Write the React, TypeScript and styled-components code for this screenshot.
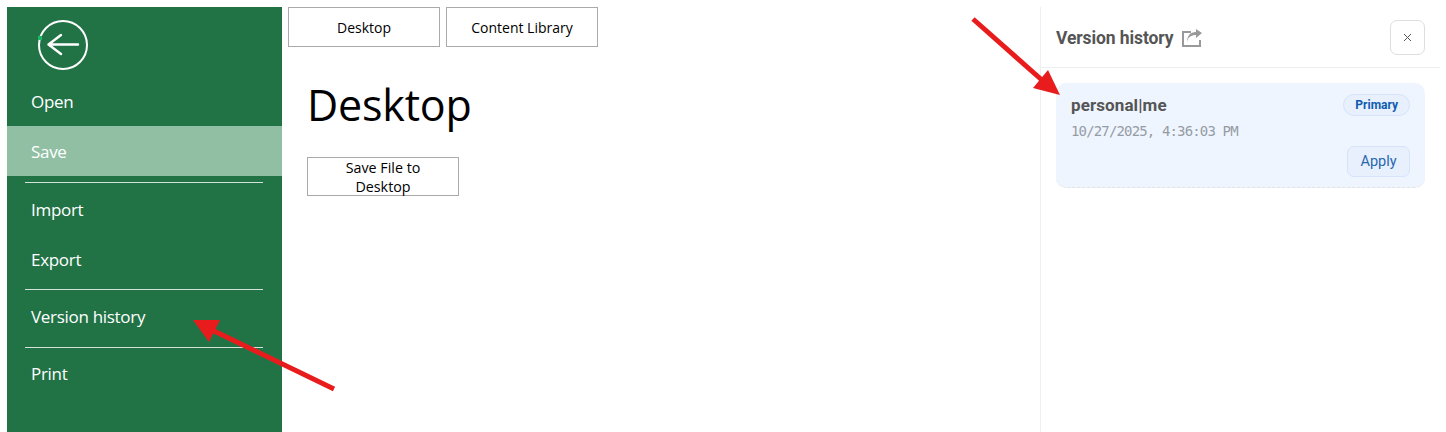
import React from "react";
import styled, { createGlobalStyle } from "styled-components";

const Global = createGlobalStyle`
  html, body { margin: 0; padding: 0; background: #fff; height: 432px; overflow: hidden; }
  #root { height: 432px; }
  * { box-sizing: border-box; }
`;

const Page = styled.div`
  position: relative;
  display: flex;
  width: 1440px;
  height: 432px;
  padding: 7px 0 0 7px;
  font-family: "Open Sans", "Noto Sans", sans-serif;
  overflow: hidden;
`;

const Sidebar = styled.nav`
  flex: 0 0 275px;
  display: flex;
  flex-direction: column;
  background: #217346;
  color: #fff;
`;

const BackWrap = styled.div`
  height: 69px;
  padding: 13px 0 0 30px;
  svg { display: block; }
`;

const MenuItem = styled.div<{ $active?: boolean }>`
  height: 50px;
  display: flex;
  align-items: center;
  padding-left: 24px;
  font-size: 17px;
  letter-spacing: -0.3px;
  background: ${(p) => (p.$active ? "#90bfa3" : "transparent")};
`;

const Rule = styled.hr<{ $top: number; $bottom: number }>`
  margin: ${(p) => p.$top}px 19px ${(p) => p.$bottom}px 18px;
  border: 0;
  height: 1px;
  flex: none;
  background: #d3e3d9;
`;

const Main = styled.main`
  flex: 1;
  display: flex;
  flex-direction: column;
  padding-left: 6px;
  min-width: 0;
`;

const Tabs = styled.div`
  display: flex;
  gap: 6px;
`;

const Tab = styled.button`
  width: 152px;
  height: 40px;
  background: #fff;
  border: 1px solid #aaa;
  font-family: "Open Sans", sans-serif;
  font-size: 14px;
  color: #000;
  padding: 0;
`;

const Heading = styled.h1`
  margin: 26px 0 21px 19px;
  font-family: "Open Sans", sans-serif;
  font-weight: 400;
  font-size: 43px;
  line-height: 63px;
  letter-spacing: -0.2px;
  color: #000;
`;

const SaveButton = styled.button`
  margin-left: 19px;
  width: 152px;
  height: 39px;
  background: #fff;
  border: 1px solid #aaa;
  padding: 0 30px 2px;
  font-family: "Open Sans", sans-serif;
  font-size: 14.3px;
  line-height: 19px;
  color: #000;
`;

const Panel = styled.aside`
  flex: 0 0 400px;
  border-left: 1px solid #eceef1;
  display: flex;
  flex-direction: column;
  font-family: "Roboto", "Noto Sans", sans-serif;
`;

const PanelHeader = styled.header`
  height: 61px;
  flex: none;
  display: flex;
  align-items: center;
  justify-content: space-between;
  padding: 0 15px;
  border-bottom: 1px solid #eceef1;
`;

const TitleGroup = styled.div`
  display: flex;
  align-items: center;
  gap: 9px;
  padding-top: 1px;
`;

const Title = styled.span`
  font-size: 17.5px;
  font-weight: 700;
  color: #555;
  letter-spacing: -0.1px;
`;

const CloseButton = styled.button`
  width: 35px;
  height: 35px;
  border: 1px solid #dcdee2;
  border-radius: 7px;
  background: #fff;
  display: flex;
  align-items: center;
  justify-content: center;
  padding: 0;
`;

const Card = styled.div`
  margin: 15px 15px 0;
  height: 105px;
  padding: 11px 15px 0;
  background: #eef5ff;
  border-radius: 10px;
  border-bottom: 1px dashed #dfe3e8;
  display: flex;
  flex-direction: column;
`;

const CardTop = styled.div`
  display: flex;
  justify-content: space-between;
  align-items: center;
`;

const CardName = styled.span`
  font-size: 17px;
  font-weight: 700;
  color: #555;
  letter-spacing: 0.1px;
`;

const Badge = styled.span`
  height: 22px;
  padding: 0 11px;
  border: 1px solid #d5e4fa;
  border-radius: 11px;
  background: #e8f0fd;
  color: #0f5bb0;
  font-size: 12px;
  font-weight: 700;
  display: flex;
  align-items: center;
`;

const Stamp = styled.div`
  margin-top: 6px;
  font-family: "DejaVu Sans Mono", "Liberation Mono", monospace;
  font-size: 14px;
  letter-spacing: -0.85px;
  line-height: 19px;
  color: #969ca3;
`;

const CardFoot = styled.div`
  display: flex;
  justify-content: flex-end;
  margin-top: 5px;
`;

const Apply = styled.button`
  width: 63px;
  height: 31px;
  border: 1px solid #d5e4fa;
  border-radius: 7px;
  background: #e8f0fd;
  color: #2767ae;
  font-family: "Roboto", sans-serif;
  font-size: 14.5px;
  padding: 0;
`;

const Arrows = styled.svg`
  position: absolute;
  left: 0;
  top: 0;
  pointer-events: none;
`;

export default function App() {
  return (
    <Page>
      <Global />
      <Sidebar>
        <BackWrap>
          <svg width="52" height="52" viewBox="0 0 52 52" fill="none">
            <circle cx="26" cy="25" r="24" stroke="#fff" strokeWidth="2" />
            <path
              d="M41 24.5H11.5M24 15L11.5 24.5L24 34"
              stroke="#fff"
              strokeWidth="2.4"
              strokeLinecap="round"
              strokeLinejoin="round"
            />
            <rect x="1" y="16" width="4" height="4" fill="#1fb866" />
          </svg>
        </BackWrap>
        <MenuItem>Open</MenuItem>
        <MenuItem $active>Save</MenuItem>
        <Rule $top={6} $bottom={1} />
        <MenuItem>Import</MenuItem>
        <MenuItem>Export</MenuItem>
        <Rule $top={5} $bottom={1} />
        <MenuItem>Version history</MenuItem>
        <Rule $top={6} $bottom={0} />
        <MenuItem>Print</MenuItem>
      </Sidebar>
      <Main>
        <Tabs>
          <Tab>Desktop</Tab>
          <Tab>Content Library</Tab>
        </Tabs>
        <Heading>Desktop</Heading>
        <SaveButton>Save File to Desktop</SaveButton>
      </Main>
      <Panel>
        <PanelHeader>
          <TitleGroup>
            <Title>Version history</Title>
            <svg width="20" height="18" viewBox="0 0 20 18" fill="none">
              <path d="M9 3H1v14h17v-6" stroke="#999" strokeWidth="2" />
              <path d="M5 13c1-5 4-7 9-7V9l6-5-6-4v3C8 3 5 7 5 13z" fill="#999" />
            </svg>
          </TitleGroup>
          <CloseButton aria-label="Close">
            <svg width="9" height="9" viewBox="0 0 9 9" fill="none">
              <path d="M1 1L8 8M8 1L1 8" stroke="#555" strokeWidth="1" />
            </svg>
          </CloseButton>
        </PanelHeader>
        <Card>
          <CardTop>
            <CardName>personal|me</CardName>
            <Badge>Primary</Badge>
          </CardTop>
          <Stamp>10/27/2025, 4:36:03 PM</Stamp>
          <CardFoot>
            <Apply>Apply</Apply>
          </CardFoot>
        </Card>
      </Panel>
      <Arrows width="1446" height="432" viewBox="0 0 1446 432">
        <path d="M334 389L212 330" stroke="#e81c1c" strokeWidth="5" />
        <path d="M193 320H220L209 342Z" fill="#e81c1c" />
        <path d="M973 19L1043 81" stroke="#e81c1c" strokeWidth="5" />
        <path d="M1060 95L1048 70L1033 88Z" fill="#e81c1c" />
      </Arrows>
    </Page>
  );
}
